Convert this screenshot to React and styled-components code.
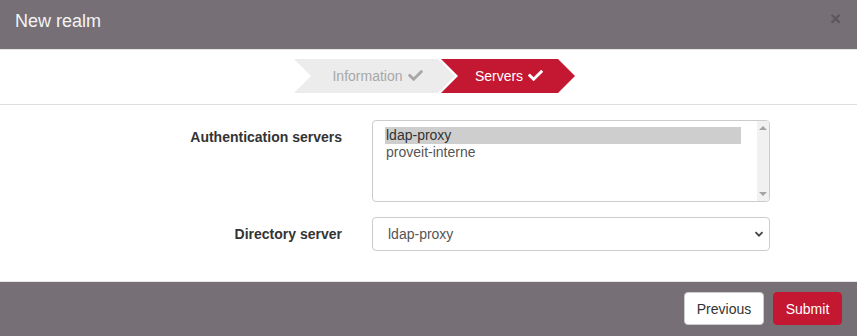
import styled, { createGlobalStyle } from "styled-components";
import { FaCheck } from "react-icons/fa";

const GlobalStyle = createGlobalStyle`
  html, body {
    margin: 0;
    padding: 0;
    background: #ffffff;
    font-family: "Liberation Sans", Arial, sans-serif;
    font-size: 14px;
    color: #333333;
  }
`;

const Modal = styled.div`
  width: 857px;
  height: 336px;
  display: flex;
  flex-direction: column;
  background: #ffffff;
  overflow: hidden;
`;

const Header = styled.div`
  height: 49px;
  display: flex;
  align-items: center;
  justify-content: space-between;
  padding: 0 15px;
  background: #766f76;
  border-bottom: 1px solid #e5e5e5;
`;

const Title = styled.h4`
  margin: 0;
  font-size: 18px;
  font-weight: normal;
  color: #f4f4f4;
  line-height: 20px;
  padding-bottom: 7px;
`;

const Close = styled.button`
  border: 0;
  background: none;
  padding: 0;
  margin-top: -12px;
  margin-right: 1px;
  font-family: "Liberation Sans", Arial, sans-serif;
  font-size: 19px;
  font-weight: bold;
  line-height: 1;
  color: #5b565c;
  cursor: pointer;
`;

const Wizard = styled.div`
  height: 55px;
  display: flex;
  justify-content: center;
  align-items: flex-start;
  padding: 9px 0 0 12px;
  box-sizing: border-box;
  border-bottom: 1px solid #dddddd;
`;

const Step = styled.div`
  height: 34px;
  width: ${(p) => p.$width}px;
  margin-left: ${(p) => (p.$first ? 0 : -14)}px;
  display: flex;
  align-items: center;
  justify-content: center;
  gap: 5px;
  padding-left: ${(p) => (p.$first ? 6 : 2)}px;
  box-sizing: border-box;
  font-size: 14px;
  background: ${(p) => (p.$active ? "#c41732" : "#ececec")};
  color: ${(p) => (p.$active ? "#ffffff" : "#a8a8a8")};
  clip-path: polygon(
    0 0,
    calc(100% - 17px) 0,
    100% 50%,
    calc(100% - 17px) 100%,
    0 100%,
    17px 50%
  );
  svg {
    width: 15px;
    height: 15px;
    margin-top: -2px;
  }
`;

const Body = styled.div`
  flex: 1;
  display: grid;
  grid-template-columns: 1fr 398px;
  column-gap: 30px;
  row-gap: 15px;
  align-content: start;
  padding: 15px 87px 0 0;
  border-bottom: 1px solid #e5e5e5;
`;

const Label = styled.label`
  text-align: right;
  font-weight: bold;
  color: #333333;
  padding-top: ${(p) => p.$top}px;
`;

const ListBox = styled.div`
  height: 82px;
  box-sizing: border-box;
  border: 1px solid #cccccc;
  border-radius: 4px;
  display: flex;
  overflow: hidden;
`;

const Options = styled.div`
  flex: 1;
  padding: 6px 16px 0 12px;
`;

const Option = styled.div`
  height: 17px;
  line-height: 17px;
  padding-left: 1px;
  color: ${(p) => (p.$selected ? "#333333" : "#555555")};
  background: ${(p) => (p.$selected ? "#cecece" : "transparent")};
`;

const ScrollTrack = styled.div`
  width: 12px;
  background: #f1f1f1;
  display: flex;
  flex-direction: column;
  justify-content: space-between;
  align-items: center;
  padding: 5px 0;
`;

const Arrow = styled.span`
  width: 0;
  height: 0;
  border-left: 4px solid transparent;
  border-right: 4px solid transparent;
  ${(p) =>
    p.$up
      ? "border-bottom: 4px solid #a3a3a3;"
      : "border-top: 4px solid #a3a3a3;"}
`;

const SelectBox = styled.div`
  height: 34px;
  box-sizing: border-box;
  border: 1px solid #cccccc;
  border-radius: 4px;
  display: flex;
  align-items: center;
  justify-content: space-between;
  padding: 0 5px 0 15px;
  color: #555555;
  svg {
    width: 10px;
    height: 10px;
  }
`;

const Footer = styled.div`
  height: 54px;
  background: #766f76;
  display: flex;
  justify-content: flex-end;
  align-items: flex-start;
  gap: 9px;
  padding: 10px 15px 0 0;
  box-sizing: border-box;
`;

const Button = styled.button`
  height: 33px;
  width: ${(p) => p.$width}px;
  padding: 0;
  border-radius: 4px;
  font-family: "Liberation Sans", Arial, sans-serif;
  font-size: 14px;
  border: 1px solid ${(p) => (p.$primary ? "#c41732" : "#cccccc")};
  background: ${(p) => (p.$primary ? "#c41732" : "#ffffff")};
  color: ${(p) => (p.$primary ? "#ffffff" : "#333333")};
  cursor: pointer;
`;

export default function App() {
  return (
    <>
      <GlobalStyle />
      <Modal>
        <Header>
          <Title>New realm</Title>
          <Close>×</Close>
        </Header>
        <Wizard>
          <Step $first $width={161}>
            Information <FaCheck />
          </Step>
          <Step $active $width={134}>
            Servers <FaCheck />
          </Step>
        </Wizard>
        <Body>
          <Label $top={9}>Authentication servers</Label>
          <ListBox>
            <Options>
              <Option $selected>ldap-proxy</Option>
              <Option>proveit-interne</Option>
            </Options>
            <ScrollTrack>
              <Arrow $up />
              <Arrow />
            </ScrollTrack>
          </ListBox>
          <Label $top={9}>Directory server</Label>
          <SelectBox>
            <span>ldap-proxy</span>
            <svg viewBox="0 0 10 10">
              <path d="M1.5 3.2 L5 6.7 L8.5 3.2" fill="none" stroke="#444" strokeWidth="1.8" />
            </svg>
          </SelectBox>
        </Body>
        <Footer>
          <Button $width={80}>Previous</Button>
          <Button $primary $width={69}>Submit</Button>
        </Footer>
      </Modal>
    </>
  );
}
